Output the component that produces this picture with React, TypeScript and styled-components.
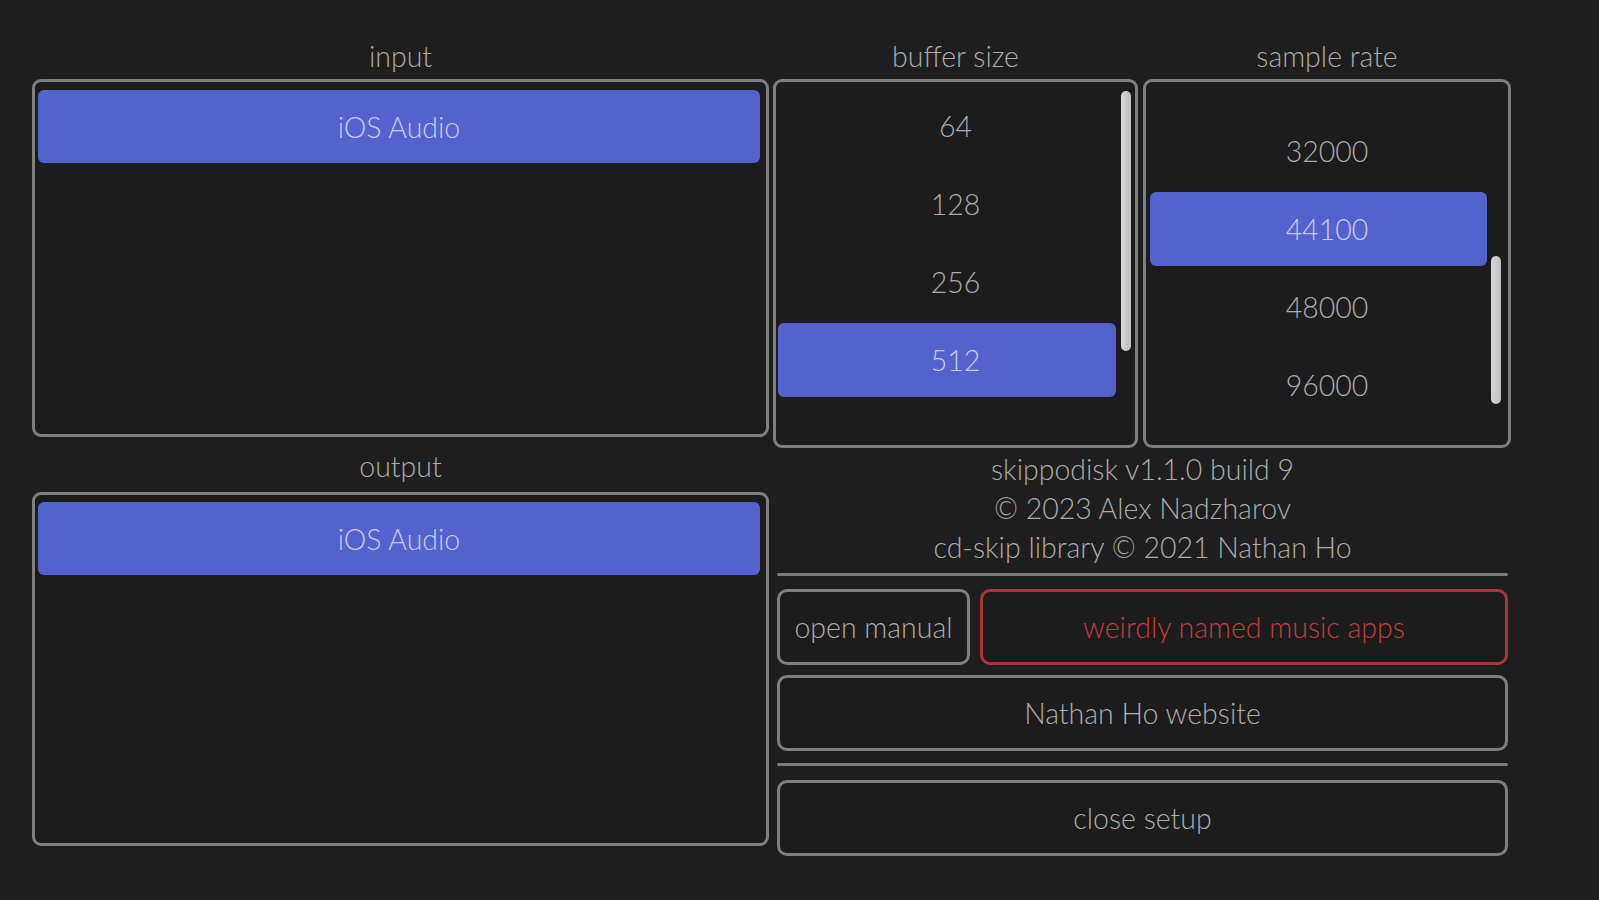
import React from "react";
import styled, { createGlobalStyle } from "styled-components";

const GlobalStyle = createGlobalStyle`
  html, body {
    margin: 0;
    padding: 0;
    background: #1e1e1e;
    font-family: "Lato", "Open Sans", sans-serif;
  }
  * { box-sizing: border-box; }
`;

const FONT = `
  font-family: "Lato", "Open Sans", sans-serif;
  font-weight: 300;
  font-size: 28.5px;
`;

const Page = styled.div`
  display: grid;
  grid-template-columns: 737px 738px;
  column-gap: 4px;
  padding: 36px 0 0 32px;
  width: 1599px;
  height: 900px;
  background: #1e1e1e;
`;

const Column = styled.div`
  display: flex;
  flex-direction: column;
`;

const Label = styled.div<{ $gap?: number }>`
  height: 40px;
  line-height: 40px;
  margin-top: ${(p) => p.$gap ?? 0}px;
  text-align: center;
  ${FONT}
  color: #acacac;
`;

const ListBox = styled.div<{ $height: number; $pad: string; $gap?: number }>`
  position: relative;
  height: ${(p) => p.$height}px;
  margin-top: ${(p) => p.$gap ?? 3}px;
  border: 3px solid #7f7f7f;
  border-radius: 9px;
  background: #1c1c1c;
  padding: ${(p) => p.$pad};
  overflow: hidden;
  display: flex;
  flex-direction: column;
  gap: 4px;
`;

const Item = styled.div<{ $selected?: boolean; $h?: number; $shift?: number }>`
  flex: none;
  height: ${(p) => p.$h ?? 74}px;
  display: flex;
  align-items: center;
  justify-content: center;
  padding-left: ${(p) => p.$shift ?? 0}px;
  border-radius: 6px;
  ${FONT}
  background: ${(p) => (p.$selected ? "#5462cd" : "transparent")};
  color: ${(p) => (p.$selected ? "#c8ccf2" : "#acacac")};
`;

const Thumb = styled.div<{ $top: number; $height: number; $right: number }>`
  position: absolute;
  top: ${(p) => p.$top}px;
  right: ${(p) => p.$right}px;
  width: 10px;
  height: ${(p) => p.$height}px;
  border-radius: 5px;
  background: linear-gradient(90deg, #d8d8d8, #bdbdbd);
`;

const ListsRow = styled.div`
  display: grid;
  grid-template-columns: 365px 368px;
  column-gap: 5px;
`;

const Lower = styled.div`
  display: flex;
  flex-direction: column;
  padding: 0 3px 0 4px;
`;

const Info = styled.div`
  margin-top: 2px;
  text-align: center;
  ${FONT}
  line-height: 39px;
  color: #acacac;
`;

const Separator = styled.div<{ $gap: number }>`
  height: 3px;
  margin-top: ${(p) => p.$gap}px;
  background: #7c7c7c;
  border-radius: 2px;
`;

const ButtonRow = styled.div`
  display: grid;
  grid-template-columns: 193px 1fr;
  column-gap: 10px;
  margin-top: 13px;
`;

const Button = styled.button<{ $danger?: boolean; $gap?: number }>`
  height: 76px;
  margin-top: ${(p) => p.$gap ?? 0}px;
  border: 3px solid ${(p) => (p.$danger ? "#a8353a" : "#7f7f7f")};
  border-radius: 10px;
  background: #1c1c1c;
  ${FONT}
  color: ${(p) => (p.$danger ? "#c23c40" : "#acacac")};
  padding: 0;
  white-space: nowrap;
`;

const bufferSizes = ["64", "128", "256", "512"];
const sampleRates = ["32000", "44100", "48000", "96000"];

export default function App() {
  return (
    <>
      <GlobalStyle />
      <Page>
        <Column>
          <Label>input</Label>
          <ListBox $height={358} $pad="8px 6px 0 3px">
            <Item $selected $h={73}>iOS Audio</Item>
          </ListBox>
          <Label $gap={9}>output</Label>
          <ListBox $height={354} $gap={6} $pad="7px 6px 0 3px">
            <Item $selected $h={73}>iOS Audio</Item>
          </ListBox>
        </Column>
        <Column>
          <ListsRow>
            <Column>
              <Label>buffer size</Label>
              <ListBox $height={369} $pad="7px 19px 0 2px">
                {bufferSizes.map((v) => (
                  <Item key={v} $shift={17} $selected={v === "512"}>
                    {v}
                  </Item>
                ))}
                <Thumb $top={9} $height={260} $right={4} />
              </ListBox>
            </Column>
            <Column>
              <Label>sample rate</Label>
              <ListBox $height={369} $pad="32px 21px 0 4px">
                {sampleRates.map((v) => (
                  <Item key={v} $shift={17} $selected={v === "44100"}>
                    {v}
                  </Item>
                ))}
                <Thumb $top={174} $height={148} $right={7} />
              </ListBox>
            </Column>
          </ListsRow>
          <Lower>
            <Info>
              skippodisk v1.1.0 build 9
              <br />© 2023 Alex Nadzharov
              <br />
              cd-skip library © 2021 Nathan Ho
            </Info>
            <Separator $gap={6} />
            <ButtonRow>
              <Button>open manual</Button>
              <Button $danger>weirdly named music apps</Button>
            </ButtonRow>
            <Button $gap={10}>Nathan Ho website</Button>
            <Separator $gap={12} />
            <Button $gap={14}>close setup</Button>
          </Lower>
        </Column>
      </Page>
    </>
  );
}
